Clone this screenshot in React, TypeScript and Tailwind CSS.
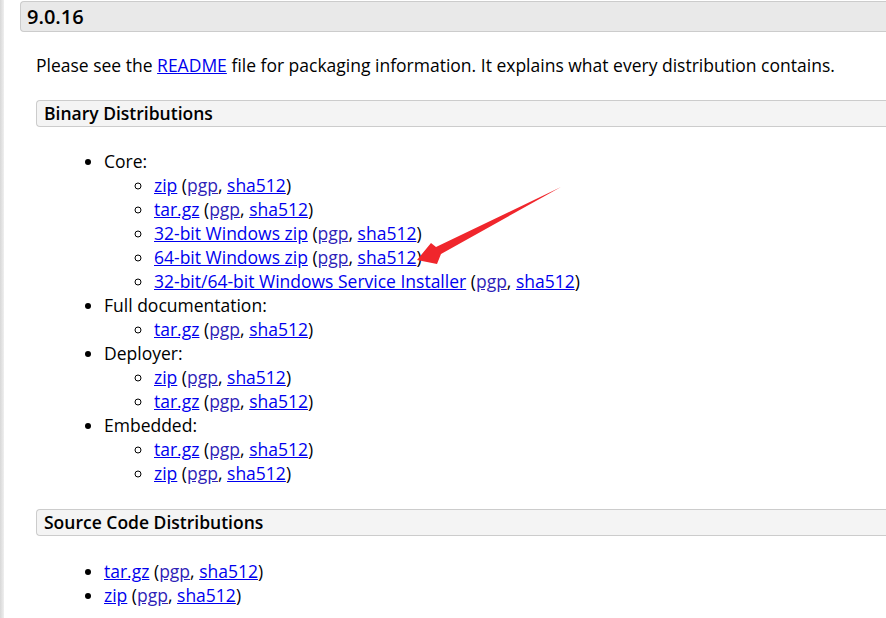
import React from "react";

const sig = (
  <>
    {" ("}
    <a href="#" className="text-[#2f1fb8] underline">pgp</a>
    {", "}
    <a href="#" className="text-[#0000ee] underline">sha512</a>
    {")"}
  </>
);

function Sub({ items }: { items: string[] }) {
  return (
    <ul className="list-[circle] pl-[50px]">
      {items.map((t, i) => (
        <li key={i}>
          <a href="#" className="text-[#0000ee] underline">{t}</a>
          {sig}
        </li>
      ))}
    </ul>
  );
}

function Arrow() {
  return (
    <svg className="absolute left-0 top-0" width="886" height="618" viewBox="0 0 886 618">
      <polygon
        points="417,260 431,243 436,247 561,187 441,254 437,264"
        fill="#f0262c"
      />
    </svg>
  );
}

export default function App() {
  return (
    <div
      className="relative w-[886px] h-[618px] overflow-hidden bg-white text-black text-[17.5px] leading-[24px]"
      style={{ fontFamily: '"Open Sans", "Noto Sans", sans-serif' }}
    >
      <div className="absolute left-0 top-0 bottom-0 w-[4px] bg-gradient-to-r from-[#d8d8d8] to-[#efefef]" />
      <div className="pl-[20px] pt-[1px]">
        <div className="h-[31px] bg-[#e9e9e9] border border-[#cccccc] border-r-0 rounded-l-[4px] pl-[6px] text-[20px] font-semibold leading-[29px]">
          9.0.16
        </div>
        <div className="pl-[16px]">
          <p className="mt-[21px]">
            Please see the <a href="#" className="text-[#0000ee] underline">README</a> file for packaging information. It explains what every distribution contains.
          </p>
          <div className="mt-[23px] h-[27px] bg-[#f4f4f4] border border-[#cccccc] border-r-0 rounded-l-[4px] pl-[7px] font-semibold leading-[25px]">
            Binary Distributions
          </div>
          <ul className="list-disc pl-[68px] mt-[22px]">
            <li>
              Core:
              <Sub
                items={[
                  "zip",
                  "tar.gz",
                  "32-bit Windows zip",
                  "64-bit Windows zip",
                  "32-bit/64-bit Windows Service Installer",
                ]}
              />
            </li>
            <li>
              Full documentation:
              <Sub items={["tar.gz"]} />
            </li>
            <li>
              Deployer:
              <Sub items={["zip", "tar.gz"]} />
            </li>
            <li>
              Embedded:
              <Sub items={["tar.gz", "zip"]} />
            </li>
          </ul>
          <div className="mt-[24px] h-[27px] bg-[#f4f4f4] border border-[#cccccc] border-r-0 rounded-l-[4px] pl-[7px] font-semibold leading-[25px]">
            Source Code Distributions
          </div>
          <ul className="list-disc pl-[68px] mt-[23px]">
            <li>
              <a href="#" className="text-[#0000ee] underline">tar.gz</a>
              {sig}
            </li>
            <li>
              <a href="#" className="text-[#0000ee] underline">zip</a>
              {sig}
            </li>
          </ul>
        </div>
      </div>
      <Arrow />
    </div>
  );
}
